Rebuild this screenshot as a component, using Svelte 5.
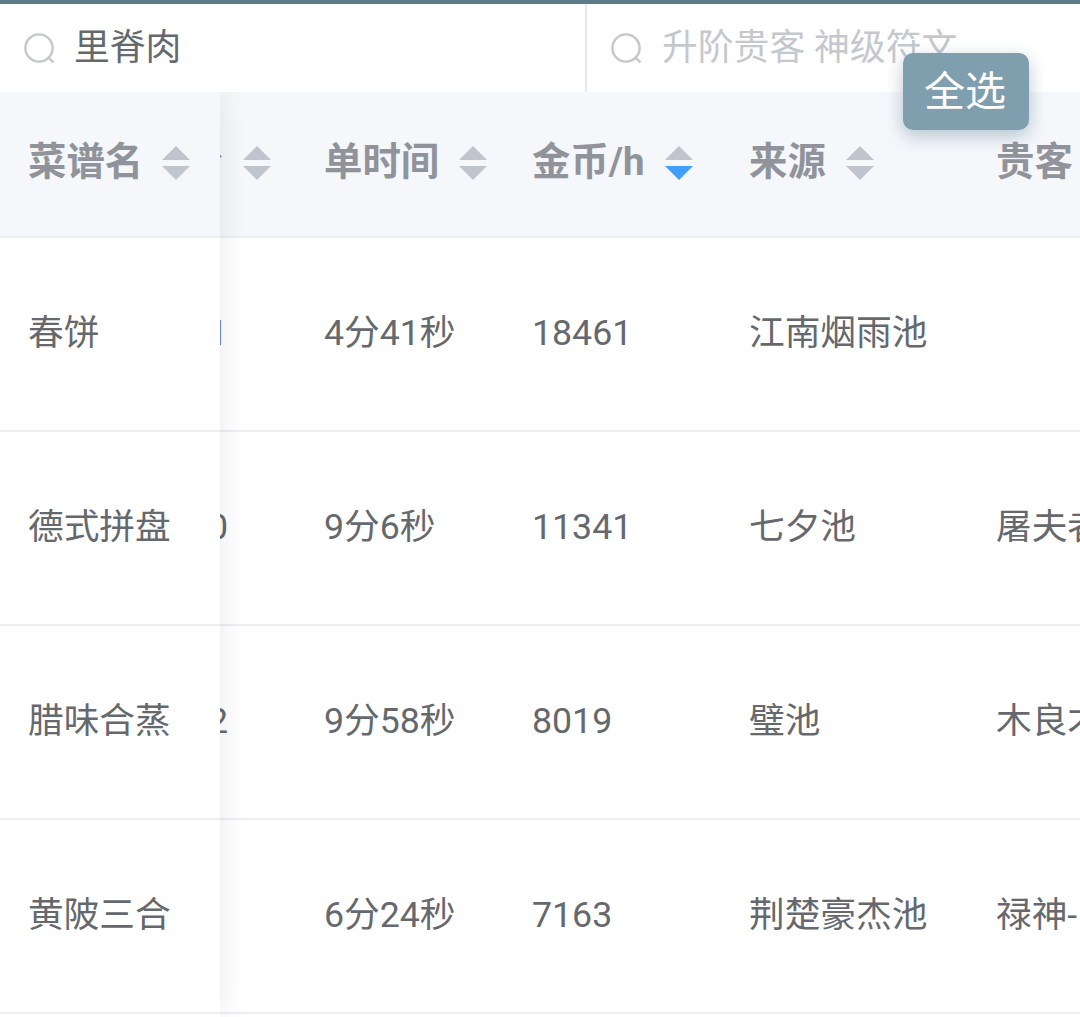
<script>
  const rows = [
    { name: '春饼', hidden: '1', time: '4分41秒', gold: '18461', src: '江南烟雨池', guest: '' },
    { name: '德式拼盘', hidden: '0', time: '9分6秒', gold: '11341', src: '七夕池', guest: '屠夫者' },
    { name: '腊味合蒸', hidden: '2', time: '9分58秒', gold: '8019', src: '璧池', guest: '木良才' },
    { name: '黄陂三合', hidden: '', time: '6分24秒', gold: '7163', src: '荆楚豪杰池', guest: '禄神-' }
  ];
  const heads = [
    { t: '', cls: 'c0', sort: true, clip: '分' },
    { t: '单时间', cls: 'c1', sort: true },
    { t: '金币/h', cls: 'c2', sort: true, desc: true },
    { t: '来源', cls: 'c3', sort: true },
    { t: '贵客', cls: 'c4' }
  ];
</script>

<div class="page">
  <div class="search">
    <label class="field first">
      <svg class="mag" viewBox="0 0 32 32"><circle cx="15" cy="15" r="13.6"/><path d="M25 25l4.4 4.4"/></svg>
      <span class="value">里脊肉</span>
    </label>
    <label class="field second">
      <svg class="mag" viewBox="0 0 32 32"><circle cx="15" cy="15" r="13.6"/><path d="M25 25l4.4 4.4"/></svg>
      <span class="placeholder">升阶贵客 神级符文</span>
    </label>
  </div>

  <button class="all">全选</button>

  <div class="table">
    <div class="scroll">
      <div class="row head">
        {#each heads as h}
          <div class="cell {h.cls}">
            {#if h.clip}<span class="clip">{h.clip}</span>{:else}<span>{h.t}</span>{/if}
            {#if h.sort}
              <span class="sort"><i class="up"></i><i class="down" class:on={h.desc}></i></span>
            {/if}
          </div>
        {/each}
      </div>
      {#each rows as r}
        <div class="row">
          <div class="cell c0"><span class="clip">{r.hidden}</span></div>
          <div class="cell c1">{r.time}</div>
          <div class="cell c2">{r.gold}</div>
          <div class="cell c3">{r.src}</div>
          <div class="cell c4">{r.guest}</div>
        </div>
      {/each}
    </div>

    <div class="fixed">
      <div class="row head">
        <div class="cell cf">
          <span>菜谱名</span>
          <span class="sort"><i class="up"></i><i class="down"></i></span>
        </div>
      </div>
      {#each rows as r}
        <div class="row"><div class="cell cf">{r.name}</div></div>
      {/each}
    </div>
  </div>
</div>

<style>
  :global(body) {
    margin: 0;
    background: #fff;
  }
  .page {
    position: relative;
    width: 1080px;
    height: 1017px;
    overflow: hidden;
    border-top: 4px solid #5e7c8b;
    box-sizing: border-box;
    font-family: Roboto, "Noto Sans CJK SC", sans-serif;
    color: #65686d;
  }
  .search {
    display: flex;
    height: 88px;
    font-size: 35.8px;
  }
  .field {
    display: flex;
    align-items: center;
    gap: 18px;
    box-sizing: border-box;
    padding-left: 24px;
  }
  .first {
    width: 587px;
    border-right: 2px solid #e6e8ec;
  }
  .second {
    flex: 1;
    white-space: nowrap;
  }
  .mag {
    width: 32px;
    height: 32px;
    margin-top: 2px;
    fill: none;
    stroke: #c4c8cd;
    stroke-width: 2.4;
    flex: none;
  }
  .value {
    line-height: 1;
    transform: translateY(1px);
  }
  .placeholder {
    color: #c4c8ce;
    line-height: 1;
    transform: translate(1px, 1px);
  }
  .all {
    position: absolute;
    left: 903px;
    top: 49px;
    width: 126px;
    height: 77px;
    padding: 2px 2px 0 0;
    border: 0;
    border-radius: 10px;
    background: #7f9eae;
    color: #fff;
    font-family: inherit;
    font-size: 41px;
    line-height: 1;
    box-shadow: 0 6px 18px rgba(90, 125, 145, 0.42);
    z-index: 3;
  }
  .table {
    position: relative;
    height: 925px;
    overflow: hidden;
  }
  .scroll {
    width: 1216px;
    margin-left: -75px;
  }
  .row {
    display: flex;
    height: 194px;
    box-sizing: border-box;
    border-bottom: 2px solid #eceef2;
  }
  .row.head {
    height: 146px;
    background: #f5f7fb;
    color: #909399;
    font-size: 38.4px;
    font-weight: 700;
  }
  .cell {
    display: flex;
    align-items: center;
    box-sizing: border-box;
    padding-left: 28px;
    line-height: 1;
    white-space: nowrap;
    overflow: hidden;
  }
  .head .cell {
    padding-bottom: 3px;
  }
  .row:not(.head) .cell {
    font-size: 35.7px;
  }
  .c0 {
    width: 371px;
    justify-content: flex-end;
    padding-right: 68px;
  }
  .head .c0 {
    padding-right: 25px;
  }
  .c1 {
    width: 208px;
  }
  .c2 {
    width: 217px;
  }
  .c3 {
    width: 247px;
  }
  .c4 {
    width: 173px;
  }
  .sort {
    display: inline-flex;
    flex-direction: column;
    gap: 6px;
    flex: none;
    margin-left: 20px;
    margin-top: 1px;
  }
  .sort i {
    display: block;
    width: 0;
    height: 0;
    border-left: 14px solid transparent;
    border-right: 14px solid transparent;
  }
  .up {
    border-bottom: 14px solid #c0c4cc;
  }
  .down {
    border-top: 14px solid #c0c4cc;
  }
  .down.on {
    border-top-color: #409eff;
  }
  .fixed {
    position: absolute;
    left: 0;
    top: 0;
    width: 220px;
    height: 100%;
    background: #fff;
    box-shadow: 0 0 28px rgba(0, 0, 0, 0.09);
  }
  .fixed .cf {
    width: 220px;
  }
  .fixed .sort {
    margin-left: 19px;
  }
</style>
